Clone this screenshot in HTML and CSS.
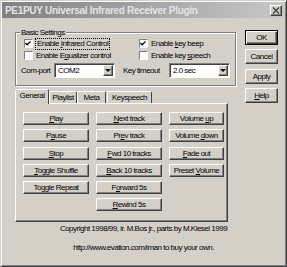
FILE: index.html
```html
<!DOCTYPE html>
<html lang="en">
<head>
  <meta charset="UTF-8">
  <title>PE1PUY Universal Infrared Receiver Plugin</title>
  <link rel="stylesheet" href="styles.css">
</head>
<body>
  <div class="window">
    <div class="titlebar">
      <span class="title">PE1PUY Universal Infrared Receiver Plugin</span>
      <span class="close">
        <svg width="8" height="7" viewBox="0 0 8 7"><path d="M1 0.5 L7 6.5 M7 0.5 L1 6.5" stroke="#404040" stroke-width="1.4"/></svg>
      </span>
    </div>

    <div class="content">
      <div class="main">
        <!-- Basic settings group -->
        <div class="group">
          <span class="group-label">Basic Settings</span>
          <div class="checks">
            <div class="check">
              <span class="box"><svg width="7" height="7" viewBox="0 0 7 7"><path d="M0.5 3 L2.5 5 L6.5 1" fill="none" stroke="#000" stroke-width="1.5"/></svg></span>
              <span class="focus">Enable <u>I</u>nfrared Control</span>
            </div>
            <div class="check">
              <span class="box"><svg width="7" height="7" viewBox="0 0 7 7"><path d="M0.5 3 L2.5 5 L6.5 1" fill="none" stroke="#000" stroke-width="1.5"/></svg></span>
              <span>Enable <u>k</u>ey beep</span>
            </div>
            <div class="check">
              <span class="box"></span>
              <span>Enable E<u>q</u>ualizer control</span>
            </div>
            <div class="check">
              <span class="box"></span>
              <span>Enable key <u>s</u>peech</span>
            </div>
          </div>
          <div class="combo-row">
            <span class="combo-label">Com-port</span>
            <div class="combo"><span class="combo-value">COM2</span><span class="drop"><i class="arrow"></i></span></div>
            <span class="combo-label timeout">Key timeout</span>
            <div class="combo"><span class="combo-value">2.0 sec</span><span class="drop"><i class="arrow"></i></span></div>
          </div>
        </div>

        <!-- Tabs -->
        <div class="tabs">
          <div class="tab-strip">
            <span class="tab active">General</span>
            <span class="tab tab-playlist">Playlist</span>
            <span class="tab tab-meta">Meta</span>
            <span class="tab tab-keys">Keyspeech</span>
          </div>
          <div class="tab-panel">
            <div class="col">
              <button><u>P</u>lay</button>
              <button>P<u>a</u>use</button>
              <button><u>S</u>top</button>
              <button><u>T</u>oggle Shuffle</button>
              <button>Toggle Repeat</button>
            </div>
            <div class="col">
              <button><u>N</u>ext track</button>
              <button>Pr<u>e</u>v track</button>
              <button><u>F</u>wd 10 tracks</button>
              <button><u>B</u>ack 10 tracks</button>
              <button>F<u>o</u>rward 5s</button>
              <button><u>R</u>ewind 5s</button>
            </div>
            <div class="col col-narrow">
              <button>Volume <u>u</u>p</button>
              <button>Volume <u>d</u>own</button>
              <button><u>F</u>ade out</button>
              <button>Preset <u>V</u>olume</button>
            </div>
          </div>
        </div>
      </div>

      <div class="side">
        <button class="default">OK</button>
        <button>Cancel</button>
        <button>Apply</button>
        <button><u>H</u>elp</button>
      </div>
    </div>

    <div class="footer">
      <p>Copyright 1998/99, ir. M.Bos jr., parts by M.Kiesel 1999</p>
      <p class="link">http://www.evation.com/iman to buy your own.</p>
    </div>
  </div>
</body>
</html>
```

FILE: styles.css
```css
body {
  margin: 0;
  font-family: "Liberation Sans", Arial, sans-serif;
  font-size: 8px;
  letter-spacing: -0.5px;
  color: #000;
  background: #d4d0c8;
}

.window {
  width: 287px;
  height: 267px;
  box-sizing: border-box;
  padding: 1px;
  border: 1px solid;
  border-color: #d4d0c8 #404040 #404040 #d4d0c8;
  box-shadow: inset 1px 1px #fff, inset -1px -1px #808080;
  background: #d4d0c8;
}

.titlebar {
  height: 16px;
  display: flex;
  align-items: center;
  justify-content: space-between;
  padding: 0 3px 0 3px;
  background: linear-gradient(to right, #808080, #c8c8c8);
}

.title {
  font-weight: bold;
  font-size: 10px;
  letter-spacing: -0.3px;
  color: #e4e4e4;
}

.close {
  width: 12px;
  height: 11px;
  box-sizing: border-box;
  display: flex;
  align-items: center;
  justify-content: center;
  background: #d4d0c8;
  border: 1px solid;
  border-color: #fff #404040 #404040 #fff;
  box-shadow: inset -1px -1px #808080;
}

.content {
  display: flex;
  padding-left: 13px;
}

.main {
  width: 221px;
  margin-top: 14px;
}

.side {
  display: flex;
  flex-direction: column;
  gap: 4.3px;
  margin-left: 9px;
  margin-top: 12px;
}

.side button {
  width: 33px;
  height: 15px;
}

.side button.default {
  border: 1px solid #000;
  box-shadow: inset 1px 1px #fff, inset -1px -1px #404040, inset -2px -2px #808080;
}

/* group box */
.group {
  position: relative;
  height: 54px;
  box-sizing: border-box;
  padding: 6px 0 0 8px;
  border: 1px solid #808080;
  box-shadow: 1px 1px 0 #fff, inset 1px 1px 0 #fff;
}

.group-label {
  position: absolute;
  top: -5px;
  left: 4px;
  padding: 0 1px;
  line-height: 9px;
  background: #d4d0c8;
}

.checks {
  display: grid;
  grid-template-columns: 115px auto;
  row-gap: 3px;
}

.check {
  display: flex;
  align-items: center;
  gap: 3px;
  height: 9px;
  white-space: nowrap;
}

.box {
  width: 9px;
  height: 9px;
  box-sizing: border-box;
  padding: 1px;
  display: flex;
  background: #fff;
  border: 1px solid;
  border-color: #808080 #fff #fff #808080;
}

.box svg {
  margin: -1px 0 0 -1px;
}

.focus {
  outline: 1px dotted #000;
  padding: 0 1px;
  line-height: 10px;
}

.combo-row {
  display: flex;
  align-items: center;
  margin: 3px 0 0 -3px;
}

.combo-label {
  width: 33px;
  white-space: nowrap;
}

.combo-label.timeout {
  width: 46px;
  margin-left: 8px;
}

.combo {
  width: 61px;
  height: 15px;
  box-sizing: border-box;
  display: flex;
  align-items: center;
  padding: 1px;
  background: #fff;
  border: 1px solid;
  border-color: #808080 #fff #fff #808080;
  box-shadow: inset 1px 1px #404040;
}

.combo-value {
  flex: 1;
  padding-left: 2px;
}

.drop {
  width: 10px;
  height: 11px;
  box-sizing: border-box;
  display: flex;
  align-items: center;
  justify-content: center;
  background: #d4d0c8;
  border: 1px solid;
  border-color: #fff #404040 #404040 #fff;
  box-shadow: inset -1px -1px #808080;
}

.arrow {
  width: 0;
  height: 0;
  border-left: 3px solid transparent;
  border-right: 3px solid transparent;
  border-top: 3px solid #000;
}

/* tabs */
.tabs {
  margin-top: 3px;
}

.tab-strip {
  display: flex;
  align-items: flex-end;
  height: 14px;
}

.tab {
  height: 12px;
  box-sizing: border-box;
  line-height: 11px;
  text-align: center;
  border: 1px solid;
  border-bottom: none;
  border-color: #fff #404040 transparent #fff;
  border-radius: 2px 2px 0 0;
  white-space: nowrap;
}

.tab.active {
  position: relative;
  width: 34px;
  height: 15px;
  margin-bottom: -1px;
  line-height: 12px;
  background: #d4d0c8;
}

.tab-playlist { width: 28px; }
.tab-meta { width: 29px; }
.tab-keys { width: 45px; margin-left: 1px; }

.tab-panel {
  width: 213px;
  height: 119px;
  box-sizing: border-box;
  display: flex;
  gap: 7px;
  padding: 8px 0 0 7px;
  border: 1px solid;
  border-color: #fff #404040 #404040 #fff;
  box-shadow: inset -1px -1px #808080;
}

.col {
  display: flex;
  flex-direction: column;
  gap: 4.3px;
  width: 66px;
}

.col-narrow {
  width: 55px;
}

button {
  height: 13px;
  margin: 0;
  padding: 0;
  box-sizing: border-box;
  font-family: inherit;
  font-size: 8px;
  letter-spacing: -0.5px;
  color: #000;
  background: #d4d0c8;
  border: 1px solid;
  border-color: #fff #404040 #404040 #fff;
  box-shadow: inset -1px -1px #808080;
  white-space: nowrap;
}

/* footer */
.footer {
  text-align: center;
}

.footer p {
  margin: 2px 0 0;
  line-height: 9px;
}

.footer p.link {
  margin-top: 10px;
}
```
